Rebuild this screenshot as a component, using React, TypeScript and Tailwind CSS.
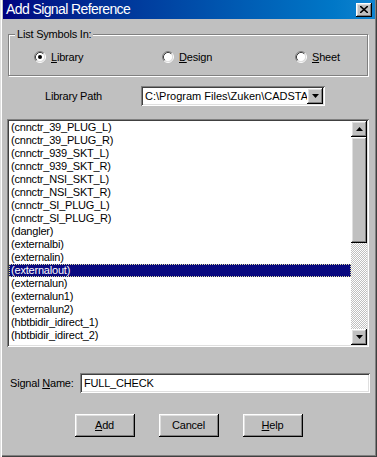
import React from "react";

const raised =
  "shadow-[inset_-1px_-1px_0_#000,inset_1px_1px_0_#fff,inset_-2px_-2px_0_#808080,inset_2px_2px_0_#dfdfdf]";
const sunken =
  "shadow-[inset_1px_1px_0_#808080,inset_-1px_-1px_0_#fff,inset_2px_2px_0_#404040,inset_-2px_-2px_0_#dfdfdf]";

function Radio({ checked }: { checked?: boolean }) {
  return (
    <svg width="12" height="12" viewBox="0 0 12 12" className="shrink-0">
      <circle cx="6" cy="6" r="4.5" fill="#fff" />
      <path d="M2.11 9.89 A5.5 5.5 0 0 1 9.89 2.11" stroke="#808080" fill="none" />
      <path d="M9.89 2.11 A5.5 5.5 0 0 1 2.11 9.89" stroke="#fff" fill="none" />
      <path d="M2.82 9.18 A4.5 4.5 0 0 1 9.18 2.82" stroke="#404040" fill="none" />
      <path d="M9.18 2.82 A4.5 4.5 0 0 1 2.82 9.18" stroke="#dfdfdf" fill="none" />
      {checked && <circle cx="6" cy="6" r="2" fill="#000" />}
    </svg>
  );
}

function ArrowDown() {
  return (
    <svg width="7" height="4" viewBox="0 0 7 4">
      <path d="M0 0 H7 L3.5 4 Z" fill="#000" />
    </svg>
  );
}
function ArrowUp() {
  return (
    <svg width="7" height="4" viewBox="0 0 7 4">
      <path d="M0 4 H7 L3.5 0 Z" fill="#000" />
    </svg>
  );
}

const items = [
  "(cnnctr_39_PLUG_L)",
  "(cnnctr_39_PLUG_R)",
  "(cnnctr_939_SKT_L)",
  "(cnnctr_939_SKT_R)",
  "(cnnctr_NSI_SKT_L)",
  "(cnnctr_NSI_SKT_R)",
  "(cnnctr_SI_PLUG_L)",
  "(cnnctr_SI_PLUG_R)",
  "(dangler)",
  "(externalbi)",
  "(externalin)",
  "(externalout)",
  "(externalun)",
  "(externalun1)",
  "(externalun2)",
  "(hbtbidir_idirect_1)",
  "(hbtbidir_idirect_2)",
];

export default function App() {
  return (
    <div
      className={`w-[377px] h-[457px] bg-[#c0c0c0] overflow-hidden font-['Liberation_Sans',Arial,sans-serif] text-[11px] tracking-[-0.2px] text-black shadow-[inset_1px_0_0_#dfdfdf,inset_2px_0_0_#fff,inset_-1px_-1px_0_#404040,inset_-2px_-2px_0_#808080]`}
    >
      {/* Title bar */}
      <div className="pl-[3px] pr-[2px]">
        <div className="h-[19px] flex items-center justify-between pl-[3px] pr-[3px] bg-gradient-to-r from-[#000080] to-[#1084d0]">
          <span className="text-white text-[14px] tracking-[-0.6px] leading-[19px]">
            Add Signal Reference
          </span>
          <div className={`w-[16px] h-[14px] bg-[#c0c0c0] flex items-center justify-center ${raised}`}>
            <svg width="8" height="7" viewBox="0 0 8 7">
              <path d="M0 0 L8 7 M8 0 L0 7" stroke="#000" strokeWidth="1.6" />
            </svg>
          </div>
        </div>
      </div>

      <div className="pl-[8px] flex flex-col">
        {/* Group box */}
        <div className="relative mt-[15px] w-[360px] h-[42px] border border-[#808080] shadow-[inset_1px_1px_0_#fff,1px_1px_0_#fff]">
          <span className="absolute left-[6px] -top-[8px] px-[2px] bg-[#c0c0c0] leading-[14px]">
            List Symbols In:
          </span>
          <div className="flex items-center h-[14px] mt-[15px] pl-[25px]">
            <div className="w-[128px] flex items-center gap-[5px]">
              <Radio checked />
              <span className="leading-[14px]">
                <span className="underline underline-offset-1">L</span>ibrary
              </span>
            </div>
            <div className="w-[133px] flex items-center gap-[5px]">
              <Radio />
              <span className="leading-[14px]">
                <span className="underline underline-offset-1">D</span>esign
              </span>
            </div>
            <div className="flex items-center gap-[5px]">
              <Radio />
              <span className="leading-[14px]">
                <span className="underline underline-offset-1">S</span>heet
              </span>
            </div>
          </div>
        </div>

        {/* Library path row */}
        <div className="mt-[10px] flex items-center h-[20px]">
          <div className="w-[133px] pl-[37px]">Library Path</div>
          <div className={`w-[184px] h-[20px] bg-white flex items-center p-[2px] ${sunken}`}>
            <div className="flex-1 overflow-hidden whitespace-nowrap pl-[2px] leading-[16px] tracking-[0px]">
              {"C:\\Program Files\\Zuken\\CADSTA"}
            </div>
            <div className={`w-[16px] h-[16px] shrink-0 bg-[#c0c0c0] flex items-center justify-center ${raised}`}>
              <ArrowDown />
            </div>
          </div>
        </div>

        {/* List box */}
        <div className={`mt-[13px] -ml-[1px] w-[362px] h-[228px] bg-white p-[2px] flex ${sunken}`}>
          <div className="flex-1 flex flex-col overflow-hidden">
            {items.map((it) => {
              const sel = it === "(externalout)";
              return (
                <div
                  key={it}
                  className={`h-[13px] leading-[11px] pl-[1px] whitespace-nowrap border border-dotted ${
                    sel ? "bg-[#0a0a80] text-white border-[#e0e0a0]" : "border-transparent"
                  }`}
                >
                  {it}
                </div>
              );
            })}
          </div>
          <div className="w-[16px] flex flex-col">
            <div className={`h-[16px] bg-[#c0c0c0] flex items-center justify-center ${raised}`}>
              <ArrowUp />
            </div>
            <div className={`h-[106px] bg-[#c0c0c0] ${raised}`} />
            <div className="flex-1 bg-[repeating-conic-gradient(#c0c0c0_0_25%,#ffffff_0_50%)] bg-[length:2px_2px]" />
            <div className={`h-[16px] bg-[#c0c0c0] flex items-center justify-center ${raised}`}>
              <ArrowDown />
            </div>
          </div>
        </div>

        {/* Signal name */}
        <div className="mt-[26px] flex items-center h-[20px]">
          <div className="w-[72px] pl-[2px]">
            Signal <span className="underline underline-offset-1">N</span>ame:
          </div>
          <div className={`w-[290px] h-[20px] bg-white px-[4px] flex items-center leading-[16px] ${sunken}`}>
            FULL_CHECK
          </div>
        </div>

        {/* Buttons */}
        <div className="mt-[21px] -ml-[8px] w-[377px] flex justify-center gap-[24px]">
          <div className={`w-[60px] h-[23px] bg-[#c0c0c0] flex items-center justify-center ${raised}`}>
            <span>
              <span className="underline underline-offset-1">A</span>dd
            </span>
          </div>
          <div className={`w-[60px] h-[23px] bg-[#c0c0c0] flex items-center justify-center ${raised}`}>
            Cancel
          </div>
          <div className={`w-[60px] h-[23px] bg-[#c0c0c0] flex items-center justify-center ${raised}`}>
            <span>
              <span className="underline underline-offset-1">H</span>elp
            </span>
          </div>
        </div>
      </div>
    </div>
  );
}
